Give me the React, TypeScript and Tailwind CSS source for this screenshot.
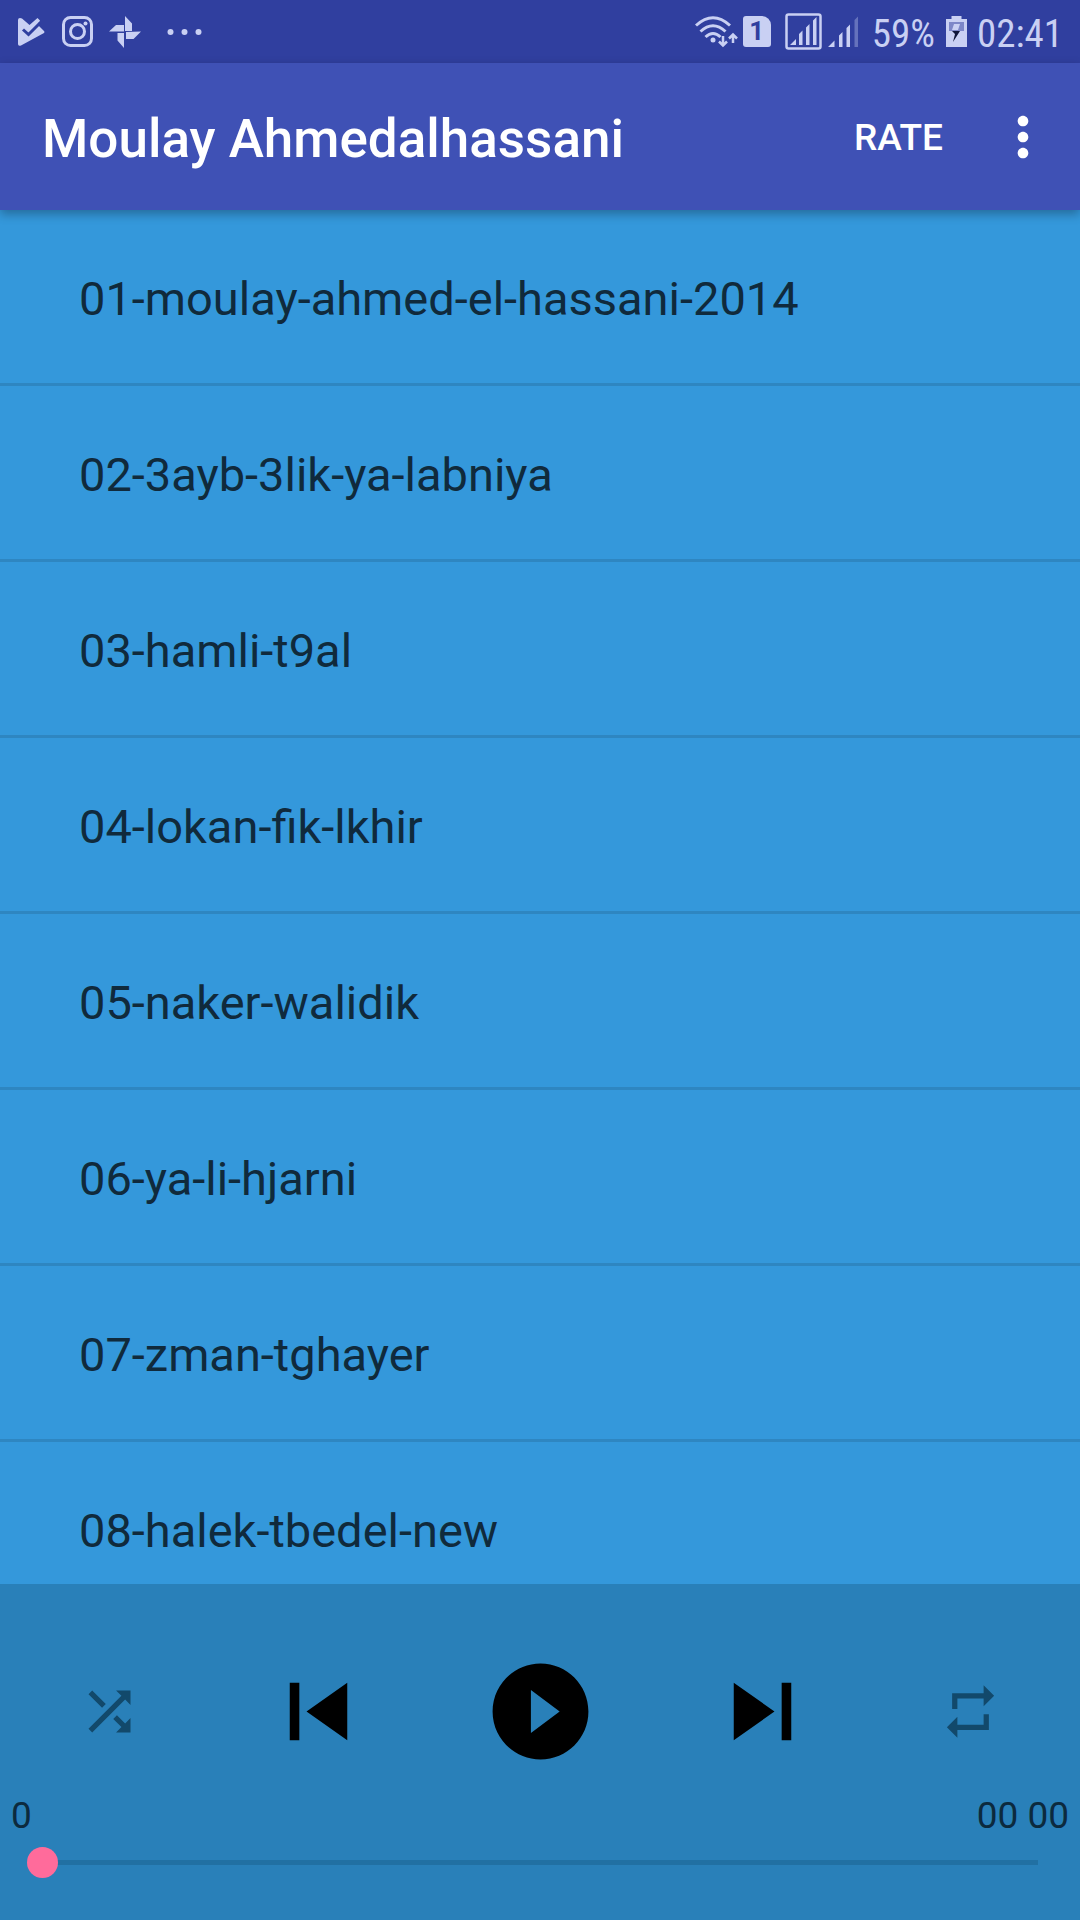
import React, { useState } from 'react';

const tracks = [
  '01-moulay-ahmed-el-hassani-2014',
  '02-3ayb-3lik-ya-labniya',
  '03-hamli-t9al',
  '04-lokan-fik-lkhir',
  '05-naker-walidik',
  '06-ya-li-hjarni',
  '07-zman-tghayer',
  '08-halek-tbedel-new',
];

interface IconProps {
  path: string;
  className: string;
}

const Icon: React.FC<IconProps> = ({ path, className }) => (
  <svg viewBox="0 0 24 24" fill="currentColor" aria-hidden="true" className={className}>
    <path d={path} />
  </svg>
);

const icons = {
  shuffle: 'M10.59 9.17L5.41 4 4 5.41l5.17 5.17 1.42-1.41zM14.5 4l2.04 2.04L4 18.59 5.41 20 17.96 7.46 20 9.5V4h-5.5zm.33 9.41l-1.41 1.41 3.13 3.13L14.5 20H20v-5.5l-2.04 2.04-3.13-3.13z',
  prev: 'M6 6h2v12H6zm3.5 6l8.5 6V6z',
  play: 'M12 2C6.48 2 2 6.48 2 12s4.48 10 10 10 10-4.48 10-10S17.52 2 12 2zm-2 14.5v-9l6 4.5-6 4.5z',
  next: 'M6 18l8.5-6L6 6v12zM16 6v12h2V6h-2z',
  repeat: 'M7 7h10v3l4-4-4-4v3H5v6h2V7zm10 10H7v-3l-4 4 4 4v-3h12v-6h-2v4z',
};

const StatusBar = () => (
  <div className="flex h-[63px] items-center justify-between bg-[#303f9f] pr-[17px] pl-[18px] text-[#c9d0f3]">
    <div className="flex items-center">
      {/* play store badge */}
      <svg viewBox="0 0 27 32" className="h-[32px] w-[27px]" fill="currentColor">
        <path d="M0 4Q0 2 2 2L4 2.500 11.500 9 19.500 2 22 4.500 19.500 8.500 26 15Q27 16 26 17L3 29.500Q0 30.500 0 28z" />
        <path d="M5 13.500l5.500 5L22 7" fill="none" stroke="#303f9f" strokeWidth="3" />
      </svg>
      <svg viewBox="0 0 32 32" className="ml-[17px] size-[32px]" fill="none" stroke="currentColor">
        <rect x="1.500" y="1.500" width="28" height="28" rx="7" strokeWidth="3" />
        <circle cx="15.500" cy="15.500" r="7" strokeWidth="3" />
        <circle cx="23.500" cy="7.500" r="2" fill="currentColor" stroke="none" />
      </svg>
      {/* pinwheel */}
      <svg viewBox="0 0 32 32" className="ml-[15px] size-[32px]" fill="currentColor">
        <path d="M16 0l7 7.500V15h-7zM32 15.500L24.500 23H17v-7zM15 32l-6.500-7.500V17H15zM0 15.500L7 9h8v6.500z" />
      </svg>
      <svg viewBox="0 0 36 8" className="ml-[26px] h-[8px] w-[36px]" fill="currentColor">
        <circle cx="3.500" cy="4" r="3" />
        <circle cx="17.500" cy="4" r="3" />
        <circle cx="31.500" cy="4" r="3" />
      </svg>
    </div>

    <div className="flex items-center">
      <svg viewBox="0 0 44 32" className="h-[32px] w-[44px]" fill="none" stroke="currentColor" strokeWidth="3">
        <path d="M1 9.500Q18 -6 35 9.500M5.500 15.500Q18 4 30.500 15.500M10.500 21Q18 14 25.500 21" />
        <circle cx="18" cy="24" r="2.500" fill="currentColor" stroke="none" />
        <path d="M28 20v9M24 25.500l4 4 4-4M38 27v-8M34 22.500l4-4 4 4" strokeWidth="2.500" />
      </svg>
      <span className="ml-[4px] flex h-[31px] w-[28px] items-center justify-center rounded-[3px] rounded-tr-[9px] bg-[#c9d0f3] text-[26px] font-bold text-[#303f9f]">
        1
      </span>
      <svg viewBox="0 0 37 37" className="ml-[14px] size-[37px]" fill="currentColor">
        <rect x="1.500" y="1.500" width="34" height="34" rx="2" fill="none" stroke="currentColor" strokeWidth="2.500" />
        <path d="M5 32l6-6v6zM14 32V21l3.500-3.500V32zM21 32V14.500L24.500 11V32zM28 32V7.500L31.500 4V32z" />
      </svg>
      <svg viewBox="0 0 34 32" className="ml-[6px] h-[32px] w-[34px]" fill="currentColor">
        <path d="M0 31l6.500-6.500V31zM11 31V19.500l3.500-3.500v15zM18.500 31V12L22 8.500V31z" />
        <path d="M26.500 31V4L30 .5V31z" opacity="0.350" />
      </svg>
      <span className="ml-[10px] pt-[4px] font-['Roboto_Condensed','Liberation_Sans_Narrow',Roboto,sans-serif] text-[39px] leading-[46px]">59%</span>
      <svg viewBox="0 0 21 32" className="ml-[11px] h-[32px] w-[21px]" fill="currentColor">
        <path d="M5.500 0h10v3H21v28H0V3h5.500z" />
        <path d="M3 6h15v9H3z" fill="#7d87c8" />
        <path d="M8 8h6l-2 6h-6z" />
        <path d="M6 15h8l-7 11 2-8z" fill="#10163a" />
      </svg>
      <span className="ml-[10px] pt-[4px] font-['Roboto_Condensed','Liberation_Sans_Narrow',Roboto,sans-serif] text-[39px] leading-[46px]">02:41</span>
    </div>
  </div>
);

const AppBar = () => (
  <header className="relative z-10 flex h-[147px] items-center bg-[#3f51b5] pl-[42px] text-white shadow-[0_4px_10px_rgba(0,0,0,0.3)]">
    <h1 className="flex-1 pt-[4px] text-[53px] leading-[64px] font-medium">Moulay Ahmedalhassani</h1>
    <button className="pt-[2px] text-[37px] font-medium">RATE</button>
    <button aria-label="More options" className="mr-[25px] ml-[48px]">
      <Icon
        className="size-[64px]"
        path="M12 8c1.100 0 2-.9 2-2s-.9-2-2-2-2 .9-2 2 .9 2 2 2zm0 2c-1.100 0-2 .9-2 2s.9 2 2 2 2-.9 2-2-.9-2-2-2zm0 6c-1.100 0-2 .9-2 2s.9 2 2 2 2-.9 2-2-.9-2-2-2z"
      />
    </button>
  </header>
);

const Player = () => {
  const [position, setPosition] = useState(0);

  return (
    <footer className="shrink-0 bg-[#2980b9] pt-[70px] pb-[42px] text-[#0c2a3e]">
      <div className="flex items-center justify-between px-[78px]">
        <button aria-label="Shuffle" className="text-[#12496b]">
          <Icon path={icons.shuffle} className="size-[63px]" />
        </button>
        <div className="flex gap-[107px] text-black">
          <button aria-label="Previous">
            <Icon path={icons.prev} className="size-[115px]" />
          </button>
          <button aria-label="Play">
            <Icon path={icons.play} className="size-[115px]" />
          </button>
          <button aria-label="Next">
            <Icon path={icons.next} className="size-[115px]" />
          </button>
        </div>
        <button aria-label="Repeat" className="text-[#12496b]">
          <Icon path={icons.repeat} className="size-[63px]" />
        </button>
      </div>

      <div className="mt-[25px] flex justify-between px-[11px] text-[37px] leading-[44px]">
        <span>0</span>
        <span>00 00</span>
      </div>

      <div className="mt-[9px] flex px-[27px]">
        <input
          type="range"
          aria-label="Seek"
          min={0}
          max={100}
          value={position}
          onChange={e => setPosition(Number(e.target.value))}
          className="h-[31px] w-full appearance-none bg-[linear-gradient(#2170a3,#2170a3)] bg-[length:calc(100%-30px)_5px] bg-center bg-no-repeat [&::-webkit-slider-thumb]:size-[31px] [&::-webkit-slider-thumb]:appearance-none [&::-webkit-slider-thumb]:rounded-full [&::-webkit-slider-thumb]:bg-[#ff6b9b]"
        />
      </div>
    </footer>
  );
};

const App = () => (
  <div className="flex h-screen flex-col bg-[#3498db] font-[Roboto,sans-serif]">
    <StatusBar />
    <AppBar />
    <ul className="min-h-0 flex-1 overflow-hidden">
      {tracks.map(name => (
        <li key={name} className="border-b-3 border-[#2e86c1]">
          <button className="flex h-[173px] w-full items-center px-[79px] pt-[4px] text-left text-[47px] leading-[56px] text-[#102a3c]">
            {name}
          </button>
        </li>
      ))}
    </ul>
    <Player />
  </div>
);

export default App;
